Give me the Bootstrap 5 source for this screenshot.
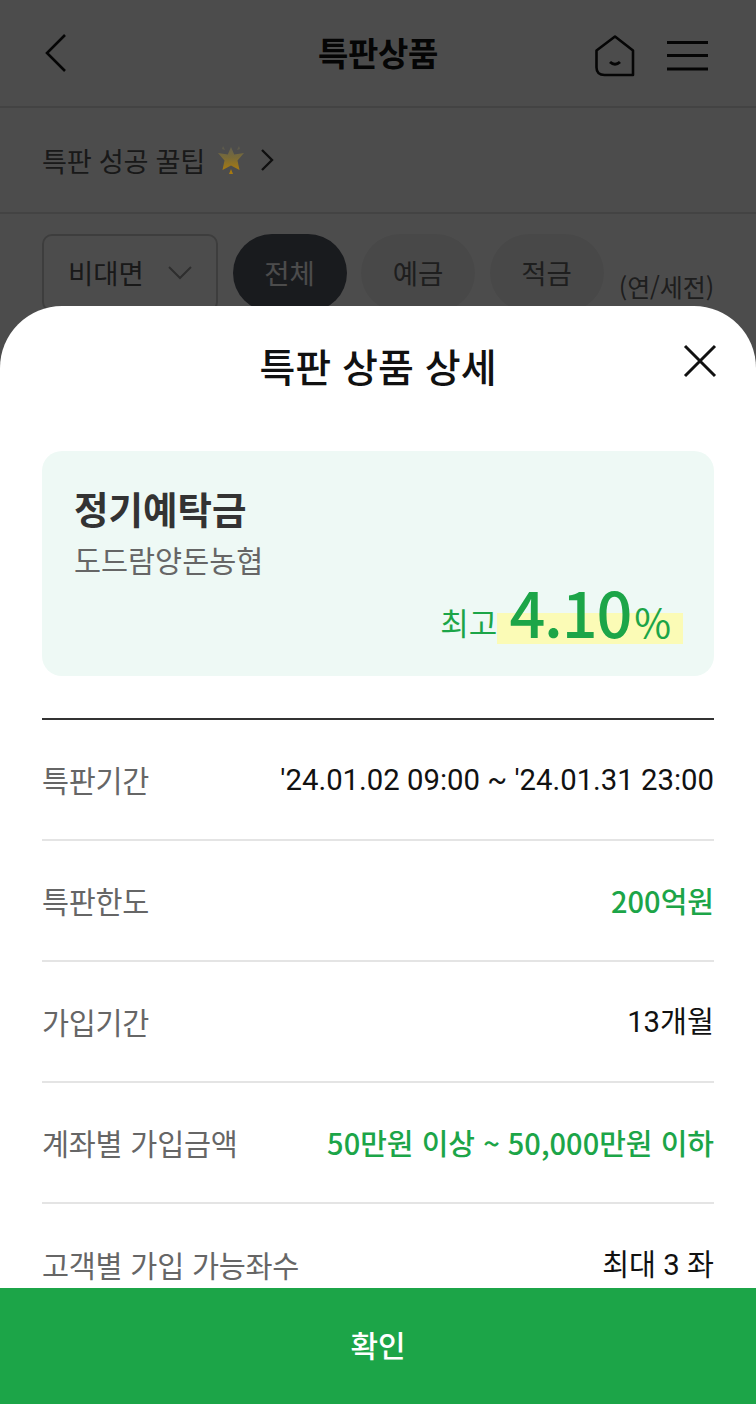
<!DOCTYPE html>
<html lang="ko">
<head>
<meta charset="utf-8">
<title>특판 상품 상세</title>
<link rel="stylesheet" href="https://cdn.jsdelivr.net/npm/bootstrap@5.3.0/dist/css/bootstrap.min.css">
<style>
html,body{margin:0;height:1404px;overflow:hidden;background:#fff}
body{font-family:"Noto Sans CJK KR","Noto Sans",sans-serif;color:#111}
.screen{height:1404px;overflow:hidden}
.app-head{height:108px;padding:0 45px;border-bottom:2px solid #e2e2e2}
.app-title{font-size:33px;font-weight:700;line-height:1;position:absolute;left:0;right:0;text-align:center;top:36px;margin:0;letter-spacing:-.4px}
.head-tools{gap:31px;margin-right:2px;padding-top:6px}
.tips{height:106px;padding:0 42px;border-bottom:2px solid #e2e2e2;font-size:27.2px;color:#555;letter-spacing:-.3px;gap:12px}
.tip-star{position:relative;z-index:1}
.filter-row{padding:20px 42px 0;gap:14.5px}
.select-box{width:176px;height:78px;border:2px solid #ccc;border-radius:10px;padding:0 24px;font-size:27.5px;color:#555;flex:none}
.pill{width:114px;height:78px;border-radius:39px;background:#f1f1f1;color:#666;font-size:27.5px;flex:none}
.pill.on{background:#555a66;color:#fff}
.unit{font-size:25px;color:#666;margin-left:auto;margin-top:34px;letter-spacing:-.1px}
.dim{position:absolute;inset:0;background:rgba(0,0,0,.7)}
.sheet{position:absolute;left:0;right:0;top:306px;bottom:0;background:#fff;border-radius:62px 62px 0 0;overflow:hidden}
.sheet-title{font-size:39px;font-weight:500;line-height:1;margin:0;padding-top:40px;text-align:center;height:145px}
.close-x{position:absolute;top:38px;right:39px;line-height:0}
.sheet-body{padding:0 42px}
.summary{height:225px;background:#eef9f5;border-radius:20px;padding:32px 32px 0;position:relative}
.prod-name{font-size:37.5px;font-weight:700;color:#333;line-height:50px}
.prod-bank{font-size:29.400px;color:#666;line-height:42px;margin-top:5px}
.rate{position:absolute;right:31px;top:128px;line-height:1;color:#1ca548;align-items:baseline}
.rate-lab{font-size:31px;transform:translateY(-3px)}
.rate-val{display:inline-flex;align-items:baseline;padding:0 12px;background:linear-gradient(to bottom,transparent 0,transparent 34px,#fbfbb6 34px,#fbfbb6 65px);height:65px}
.rate-num{font-size:63px;font-weight:500;line-height:1;letter-spacing:-1.2px}
.rate-pct{font-size:40px;line-height:1;font-weight:400;margin-left:3px}
.info-list{margin-top:42px;border-top:2px solid #333}
.info-row{height:121px;border-bottom:2px solid #e4e4e4;font-size:29.400px}
.info-row:last-child{border-bottom:0}
.lbl{color:#666;letter-spacing:-.25px}
.val{color:#111;font-family:Roboto,"Noto Sans CJK KR",sans-serif;font-size:29.300px;padding-top:2px}
.val-g{color:#1ca548;font-weight:500;font-size:29px}
.ok-btn{position:absolute;left:0;right:0;bottom:0;height:116px;background:#1ca548;color:#fff;font-size:30px;font-weight:500;border:0;border-radius:0;padding:0 0 4px}
</style>
</head>
<body>
<div class="screen position-relative">
  <header class="app-head d-flex align-items-center position-relative">
    <svg width="22" height="38" viewBox="0 0 22 38" fill="none" stroke="#111" stroke-width="2.6"><path d="M20 1 2 19l18 18"/></svg>
    <h1 class="app-title">특판상품</h1>
    <div class="head-tools ms-auto d-flex align-items-center">
      <svg width="40" height="42" viewBox="0 0 40 42" fill="none" stroke="#111" stroke-width="2.6" stroke-linejoin="round"><path d="M20 1.500 38 15.500V40H9.500Q1.500 40 1.500 32.500V15.500Z"/><path d="M15 27q5 4.500 10 0" stroke-width="3"/></svg>
      <svg width="43" height="32" viewBox="0 0 43 32" fill="none" stroke="#111" stroke-width="3"><path d="M1 2.500h41M1 15.500h41M1 29h41"/></svg>
    </div>
  </header>
  <div class="tips d-flex align-items-center">
    <span>특판 성공 꿀팁</span>
    <svg class="tip-star" width="28" height="32" viewBox="0 0 28 32"><defs><linearGradient id="st" x1="0" y1="0" x2="0" y2="1"><stop offset="0" stop-color="#65614e"/><stop offset=".45" stop-color="#786a38"/><stop offset="1" stop-color="#a87a10"/></linearGradient></defs><path d="M14 3l3.200 7.500L27 9l-6.500 7.500L22.500 26 14 21.500 5.500 26l2-9.500L1 9l9.800 1.500z" fill="url(#st)"/><path d="M6 2l2 4-3-1zM22 2l-2 4 3-1z" fill="#5e5b4c"/><path d="M14 25l2 5h-4z" fill="#a87a10"/></svg>
    <svg width="14" height="24" viewBox="0 0 14 24" fill="none" stroke="#333" stroke-width="2.400" style="margin-left:3px"><path d="M2 2l10 10L2 22"/></svg>
  </div>
  <div class="filter-row d-flex align-items-start">
    <div class="select-box d-flex align-items-center justify-content-between">
      <span>비대면</span>
      <svg width="24" height="14" viewBox="0 0 24 14" fill="none" stroke="#999" stroke-width="2"><path d="M1 1l11 11L23 1"/></svg>
    </div>
    <div class="pill on d-flex align-items-center justify-content-center">전체</div>
    <div class="pill d-flex align-items-center justify-content-center">예금</div>
    <div class="pill d-flex align-items-center justify-content-center">적금</div>
    <div class="unit">(연/세전)</div>
  </div>
  <div class="dim"></div>
  <section class="sheet">
    <h2 class="sheet-title">특판 상품 상세</h2>
    <div class="close-x"><svg width="34" height="34" viewBox="0 0 34 34" fill="none" stroke="#111" stroke-width="3"><path d="M2 2l30 30M32 2 2 32"/></svg></div>
    <div class="sheet-body">
      <div class="summary">
        <div class="prod-name">정기예탁금</div>
        <div class="prod-bank">도드람양돈농협</div>
        <div class="rate d-flex">
          <span class="rate-lab">최고</span>
          <span class="rate-val"><span class="rate-num">4.10</span><span class="rate-pct">%</span></span>
        </div>
      </div>
      <div class="info-list">
        <div class="info-row d-flex justify-content-between align-items-center"><span class="lbl">특판기간</span><span class="val">'24.01.02 09:00 ~ '24.01.31 23:00</span></div>
        <div class="info-row d-flex justify-content-between align-items-center"><span class="lbl">특판한도</span><span class="val-g">200억원</span></div>
        <div class="info-row d-flex justify-content-between align-items-center"><span class="lbl">가입기간</span><span class="val">13개월</span></div>
        <div class="info-row d-flex justify-content-between align-items-center"><span class="lbl">계좌별 가입금액</span><span class="val-g">50만원 이상 ~ 50,000만원 이하</span></div>
        <div class="info-row d-flex justify-content-between align-items-center"><span class="lbl">고객별 가입 가능좌수</span><span class="val">최대 3 좌</span></div>
      </div>
    </div>
    <button type="button" class="btn ok-btn">확인</button>
  </section>
</div>
<script src="https://cdn.jsdelivr.net/npm/bootstrap@5.3.0/dist/js/bootstrap.bundle.min.js"></script>
</body>
</html>
